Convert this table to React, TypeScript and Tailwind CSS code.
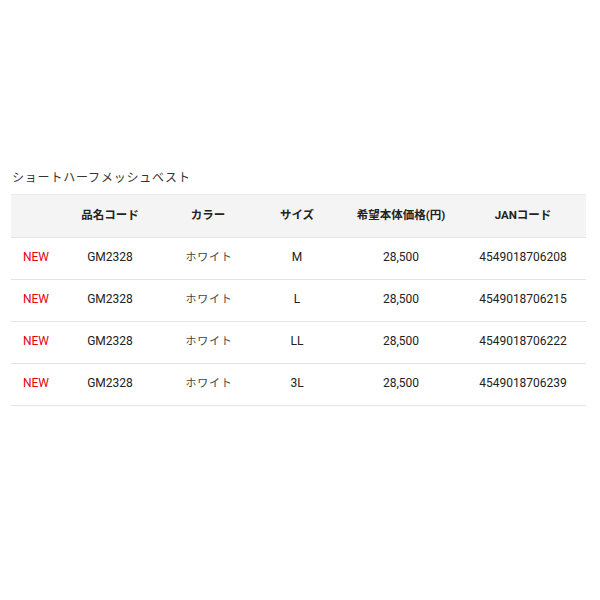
const rows = [
  { size: 'M', jan: '4549018706208' },
  { size: 'L', jan: '4549018706215' },
  { size: 'LL', jan: '4549018706222' },
  { size: '3L', jan: '4549018706239' },
];

export default function App() {
  return (
    <div className="w-[600px] h-[600px] bg-white pt-[170px] pl-[11px] font-['Roboto','Noto_Sans_CJK_JP',sans-serif] text-[#222]">
      <div className="text-[12px] leading-[16px] text-[#333] pl-[1px] tracking-[0.8px] mb-[8px]">ショートハーフメッシュベスト</div>
      <table className="w-[575px] table-fixed border-collapse text-[12px] text-center">
        <colgroup>
          <col className="w-[50px]" />
          <col className="w-[98px]" />
          <col className="w-[98px]" />
          <col className="w-[80px]" />
          <col className="w-[128px]" />
          <col className="w-[121px]" />
        </colgroup>
        <thead>
          <tr className="bg-[#f4f4f4] h-[43px] border-t border-[#eaeaea] border-b border-b-[#e3e3e3] text-[11.5px]">
            <th></th>
            <th className="font-bold">品名コード</th>
            <th className="font-bold">カラー</th>
            <th className="font-bold">サイズ</th>
            <th className="font-bold">希望本体価格(円)</th>
            <th className="font-bold pr-[5px]">JANコード</th>
          </tr>
        </thead>
        <tbody>
          {rows.map((r) => (
            <tr key={r.jan} className="h-[42px] border-b border-[#e3e3e3]">
              <td className="text-[#e60012] pb-[3px]">NEW</td>
              <td className="pb-[3px]">GM2328</td>
              <td className="text-[#444] text-[11px] tracking-[0.8px] pl-[2px] pb-[1px]">ホワイト</td>
              <td className="pb-[3px]">{r.size}</td>
              <td className="pb-[3px]">28,500</td>
              <td className="pr-[5px] pb-[3px]">{r.jan}</td>
            </tr>
          ))}
        </tbody>
      </table>
    </div>
  );
}
